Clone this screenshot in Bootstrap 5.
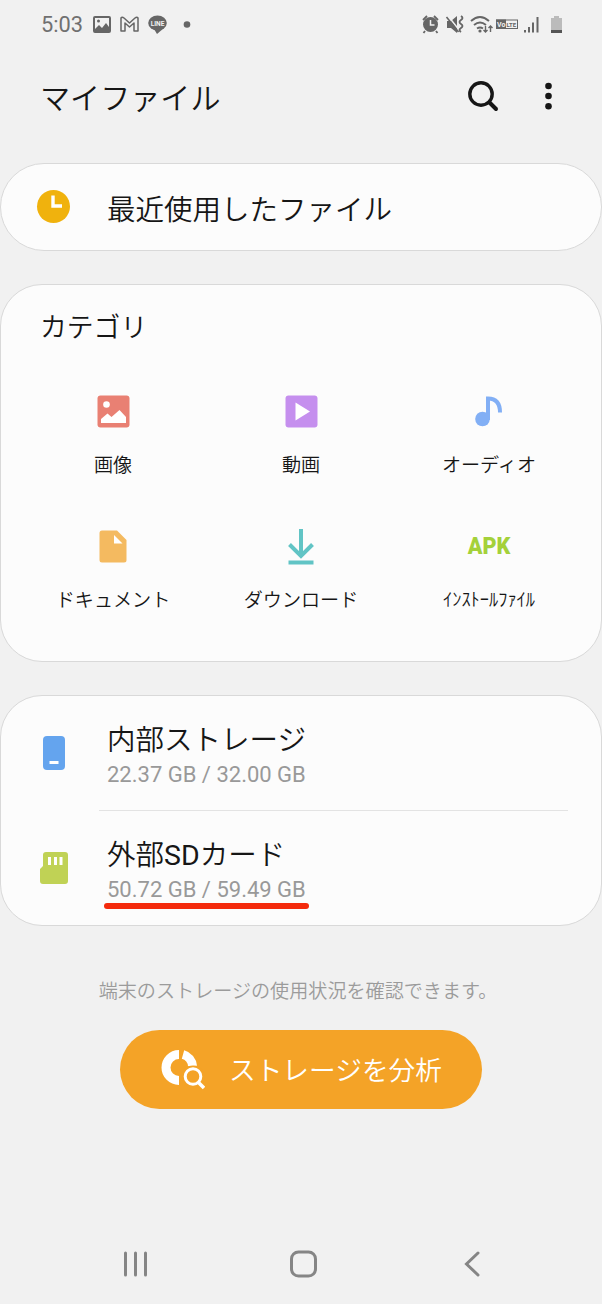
<!DOCTYPE html>
<html lang="ja">
<head>
<meta charset="utf-8">
<meta name="viewport" content="width=device-width, initial-scale=1">
<title>マイファイル</title>
<link href="https://cdn.jsdelivr.net/npm/bootstrap@5.3.0/dist/css/bootstrap.min.css" rel="stylesheet">
<style>
body{background:#f1f1f1;color:#161616;font-family:Roboto,"Noto Sans CJK JP DemiLight","Noto Sans CJK JP",sans-serif;font-weight:350;width:602px;height:1304px;overflow:hidden}
svg{display:block;flex:none}
.statusbar{height:48px;padding:0 38px 0 41px;color:#666}
.clock{font-size:21.800px;line-height:48px;font-weight:400;width:52px;padding-top:2px;color:#707070}
.topbar{height:96px;padding:0 41px 0 40px;margin-bottom:19px}
.screen-title{font-size:30.1px;line-height:90px;padding-top:6px;font-weight:350}
.panel{background:#fcfcfc;border:1px solid #d9d9d9}
.panel-recent{height:88px;border-radius:44px;margin-bottom:33px;padding-left:35px}
.panel-cat{height:378px;border-radius:42px;margin-bottom:33px;padding:23px 18px 0}
.panel-store{height:231px;border-radius:42px}
.item-title{font-size:28.5px;line-height:36px}
.item-title b{font-weight:400}
.recent-label{width:494px;padding-top:7px}
.cat-title{font-size:26.8px;line-height:40px;padding-left:21px;margin-bottom:38px;font-weight:350}
.cat-item{height:135px}
.cat-icon{height:50px}
.cat-label{font-size:19.1px;line-height:28px;margin-top:16px}
.cat-label-half{font-size:18.4px;line-height:26px}
.apk{color:#a4d13a;font-size:24px;font-weight:900;line-height:51px;transform:scaleX(.9)}
.store-row{height:114px;padding:27px 0 0 33px}
.store-icon{width:40px;height:60px;margin-right:33px}
.size-text{font-size:22px;line-height:28px;font-weight:400;color:#999;margin-top:2px}
.rule{height:1px;background:#e3e3e3;margin:0 33px 0 98px}
.redline{height:6px;width:205px;border-radius:3px;background:#f42a0c;left:-3px;top:27px}
.hint{font-size:19.1px;line-height:28px;color:#9b9b9b;margin-top:52px;padding-right:6px}
.btn-analyze{width:362px;height:79px;border-radius:40px;background:#f4a327;color:#fff;margin:24px auto 0;padding-left:41px}
.btn-analyze span{font-size:26.7px;line-height:40px;margin-left:24px;padding-top:3px}
.navkeys{height:60px;margin-top:125px}
</style>
</head>
<body>
<header class="statusbar d-flex align-items-center">
  <span class="clock">5:03</span>
  <svg width="104" height="24" viewBox="94 12 104 24">
    <path fill-rule="evenodd" fill="#666" d="M96 16h14q2 0 2 2v13q0 2-2 2H96q-2 0-2-2V18q0-2 2-2zM96 18v11l4-4 3 3 4-5 3 4v-9z"/><circle cx="99.500" cy="21" r="1.500" fill="#666"/>
    <path fill="none" stroke="#666" stroke-width="1.500" stroke-linejoin="round" d="M122 31V18q1-1.500 3 0l5.500 5 5.500-5q2-1.500 3 0v13h-4v-8l-4.500 4-4.500-4v8z"/>
    <ellipse cx="158.500" cy="23" rx="9.300" ry="7.500" fill="#666"/><path fill="#666" d="M155 29l3 5 7-6z"/>
    <text x="158.500" y="25.500" font-size="6.500" font-weight="700" text-anchor="middle" fill="#f1f1f1">LINE</text>
    <circle cx="188" cy="24.500" r="3.300" fill="#666"/>
  </svg>
  <svg class="ms-auto" width="144" height="24" viewBox="420 12 144 24">
    <g fill="none" stroke="#666" stroke-width="1.800"><path d="M423 20l4-4M434 16l4 4M425 31l-1.500 2M436 31l1.500 2"/></g>
    <circle cx="430.500" cy="24.500" r="7.500" fill="#666"/><path d="M430.500 20v5h4" fill="none" stroke="#f1f1f1" stroke-width="1.500"/>
    <path fill="#666" d="M447 21h4l6-5v17l-6-5h-4z"/><path d="M448.500 16.500l11 14" stroke="#f1f1f1" stroke-width="1.500"/><path d="M446.500 17l12 15" stroke="#666" stroke-width="1.600"/>
    <path d="M461 16q3 2 0 4t0 4 0 4 0 4" fill="none" stroke="#666" stroke-width="1.800"/>
    <g fill="none" stroke="#666" stroke-width="1.900"><path d="M471 21q9-8 18 0M474 25q6-5 12 0M477 28.500q3-2 6 0"/></g><circle cx="480" cy="31" r="1.600" fill="#666"/>
    <path d="M485.500 26v6M483.500 30l2 2 2-2M490.500 32v-6M488.500 28l2-2 2 2" fill="none" stroke="#666" stroke-width="1.400"/>
    <rect x="496.500" y="20" width="21" height="8.500" fill="none" stroke="#666"/><rect x="496" y="19.500" width="10" height="9.500" fill="#666"/>
    <text x="497" y="27" font-size="7" font-weight="700" fill="#f1f1f1">Vo</text><text x="506.500" y="27" font-size="6" font-weight="700" fill="#666">LTE</text>
    <path d="M525 30v2.500M529 27v5.500M533 22.500v10M537.500 17v15.500" stroke="#666" stroke-width="2"/>
    <path fill="#bbb" d="M551 18h3v-2h5v2h3v12h-11z"/><path fill="#555" d="M551 30h11v3h-11z"/>
  </svg>
</header>
<nav class="topbar d-flex align-items-center">
  <h1 class="screen-title m-0">マイファイル</h1>
  <svg class="ms-auto" width="94" height="36" viewBox="467 78 94 36"><circle cx="481" cy="94" r="11.200" fill="none" stroke="#161616" stroke-width="3.400"/><path d="M489.500 102.500l6.500 6.500" stroke="#161616" stroke-width="4" stroke-linecap="round"/><g fill="#161616"><circle cx="548.500" cy="86" r="3.300"/><circle cx="548.500" cy="96" r="3.300"/><circle cx="548.500" cy="106.300" r="3.300"/></g></svg>
</nav>
<main>
  <section class="panel panel-recent d-flex align-items-center">
    <svg width="34" height="34" viewBox="0 0 34 34"><circle cx="17.500" cy="16.500" r="16.500" fill="#f0b20d"/><path d="M17 5.500v10.500h9" fill="none" stroke="#fff" stroke-width="3.400"/></svg>
    <span class="item-title recent-label ms-auto">最近使用したファイル</span>
  </section>
  <section class="panel panel-cat">
    <h2 class="cat-title">カテゴリ</h2>
    <div class="row g-0 text-center">
      <div class="col-4 cat-item"><div class="cat-icon d-flex align-items-center justify-content-center"><svg width="33" height="33" viewBox="0 0 33 33"><rect x=".5" y=".5" width="32" height="32" rx="3" fill="#e98073"/><circle cx="9.500" cy="9.500" r="3.300" fill="#fff"/><path fill="#fff" d="M4 28v-4l6.500-5.500 4 3.500 8-7 6.500 7v6z"/></svg></div><div class="cat-label">画像</div></div>
      <div class="col-4 cat-item"><div class="cat-icon d-flex align-items-center justify-content-center"><svg width="33" height="33" viewBox="0 0 33 33"><rect x=".5" y=".5" width="32" height="32" rx="3" fill="#c58fee"/><path fill="#fff" d="M10.500 7.500L25 16.500l-14.500 9z"/></svg></div><div class="cat-label">動画</div></div>
      <div class="col-4 cat-item"><div class="cat-icon d-flex align-items-center justify-content-center"><svg width="29" height="33" viewBox="0 0 29 33"><circle cx="7.500" cy="24" r="7.300" fill="#82aff5"/><path d="M13 25V3.500q12 0 12 14" fill="none" stroke="#82aff5" stroke-width="4"/></svg></div><div class="cat-label">オーディオ</div></div>
      <div class="col-4 cat-item"><div class="cat-icon d-flex align-items-center justify-content-center"><svg width="28" height="33" viewBox="0 0 28 33"><path fill="#f4ba60" d="M3 .5h15L27.500 10v20q0 2.500-2.500 2.500H3Q.5 32.500.5 30V3Q.5.5 3 .5z"/><path fill="#fff" d="M15 5l8.500 8.500H15z"/></svg></div><div class="cat-label">ドキュメント</div></div>
      <div class="col-4 cat-item"><div class="cat-icon d-flex align-items-center justify-content-center"><svg width="28" height="37" viewBox="0 0 28 37"><path d="M14 1v27M2.500 16.500L14 28l11.500-11.500M1.500 34.500h25" fill="none" stroke="#61c4c5" stroke-width="4"/></svg></div><div class="cat-label">ダウンロード</div></div>
      <div class="col-4 cat-item"><div class="cat-icon apk">APK</div><div class="cat-label cat-label-half">ｲﾝｽﾄｰﾙﾌｧｲﾙ</div></div>
    </div>
  </section>
  <section class="panel panel-store">
    <div class="store-row d-flex">
      <div class="store-icon d-flex align-items-center justify-content-center"><svg width="22" height="34" viewBox="0 0 22 34"><rect width="22" height="34" rx="4" fill="#64a4ee"/><rect x="6.500" y="25" width="9" height="3" fill="#fff"/></svg></div>
      <div><div class="item-title">内部ストレージ</div><div class="size-text">22.37 GB / 32.00 GB</div></div>
    </div>
    <div class="rule"></div>
    <div class="store-row d-flex">
      <div class="store-icon d-flex align-items-center justify-content-center"><svg width="28" height="32" viewBox="0 0 28 32"><path fill="#c0d255" d="M6 0h19q3 0 3 3v26q0 3-3 3H3q-3 0-3-3V17l3-3V3q0-3 3-3z"/><path d="M9.500 5v8M15.500 5v8M21 5v8" stroke="#fff" stroke-width="3"/></svg></div>
      <div><div class="item-title">外部<b>SD</b>カード</div><div class="size-text position-relative">50.72 GB / 59.49 GB<span class="redline position-absolute"></span></div></div>
    </div>
  </section>
  <p class="hint text-center mb-0">端末のストレージの使用状況を確認できます。</p>
  <button class="btn-analyze border-0 d-flex align-items-center" type="button">
    <svg width="44" height="42" viewBox="0 0 44 42"><path d="M18 5.500A13 13 0 0 0 18 31.500M22 5.500A13 13 0 0 1 31.500 17" fill="none" stroke="#fff" stroke-width="9"/><circle cx="32" cy="28" r="11.500" fill="#f4a327"/><circle cx="32" cy="27.500" r="7.800" fill="none" stroke="#fff" stroke-width="3"/><path d="M37 33l6 6" stroke="#fff" stroke-width="3.500"/></svg>
    <span>ストレージを分析</span>
  </button>
</main>
<footer class="navkeys">
  <svg width="602" height="60" viewBox="0 1234 602 60" fill="none" stroke="#858585" stroke-width="3" stroke-linecap="round"><path d="M125.500 1253v22M135.500 1253v22M145.500 1253v22"/><rect x="291.500" y="1252" width="24" height="24" rx="7"/><path d="M478 1253l-11.500 11 11.500 11"/></svg>
</footer>
<script src="https://cdn.jsdelivr.net/npm/bootstrap@5.3.0/dist/js/bootstrap.bundle.min.js"></script>
</body>
</html>
